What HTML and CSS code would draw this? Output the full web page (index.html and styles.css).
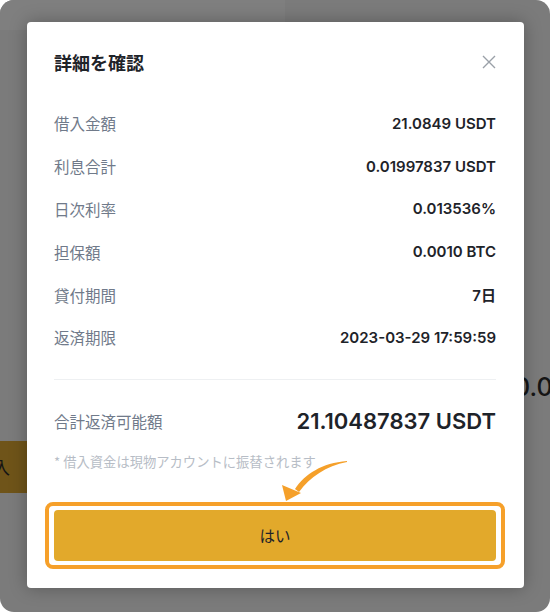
FILE: index.html
```html
<!DOCTYPE html>
<html lang="ja">
<head>
<meta charset="utf-8">
<link rel="stylesheet" href="styles.css">
</head>
<body>
<div class="screen">
  <div class="bg-top"></div>
  <div class="bg-btn">入</div>
  <div class="bg-num">0.0</div>
  <div class="modal">
    <div class="header">
      <div class="title">詳細を確認</div>
      <svg class="close" width="14" height="14" viewBox="0 0 14 14"><path d="M1 1L13 13M13 1L1 13" stroke="#9aa0a8" stroke-width="1.4" fill="none"/></svg>
    </div>
    <div class="row"><span class="label">借入金額</span><span class="value">21.0849 USDT</span></div>
    <div class="row"><span class="label">利息合計</span><span class="value">0.01997837 USDT</span></div>
    <div class="row"><span class="label">日次利率</span><span class="value">0.013536%</span></div>
    <div class="row"><span class="label">担保額</span><span class="value">0.0010 BTC</span></div>
    <div class="row"><span class="label">貸付期間</span><span class="value">7日</span></div>
    <div class="row"><span class="label">返済期限</span><span class="value">2023-03-29 17:59:59</span></div>
    <div class="divider"></div>
    <div class="total"><span class="label">合計返済可能額</span><span class="total-value">21.10487837 USDT</span></div>
    <div class="note">* 借入資金は現物アカウントに振替されます</div>
    <div class="btn">はい<span class="highlight"></span></div>
  </div>
  <svg class="arrow" width="80" height="50" viewBox="278 455 80 50">
    <path d="M347 461 C 322 463 305 474 295 489 L 299 492 C 310 477 326 466 347 462 Z" fill="#f5a02a"/>
    <path d="M286 501 L 282 485 L 301 493 Z" fill="#f5a02a"/>
  </svg>
</div>
</body>
</html>
```
FILE: styles.css
```css
html, body {
  margin: 0;
  padding: 0;
  background: #ffffff;
}
.screen {
  position: relative;
  width: 550px;
  height: 612px;
  border-radius: 14px;
  background: #7b7b7b;
  overflow: hidden;
  font-family: "Inter", "Noto Sans CJK JP", sans-serif;
}
.bg-top {
  position: absolute;
  left: 0;
  top: 0;
  width: 285px;
  height: 30px;
  background: #7f7f7f;
  border-bottom-right-radius: 8px;
}
.bg-btn {
  position: absolute;
  left: 0;
  top: 441px;
  width: 28px;
  height: 52px;
  background: #6f5419;
  color: #151515;
  font-size: 17px;
  line-height: 52px;
  text-indent: -7px;
  overflow: hidden;
  font-family: "Noto Sans CJK JP", sans-serif;
}
.bg-num {
  position: absolute;
  left: 514px;
  top: 372px;
  font-size: 25px;
  font-weight: 500;
  color: #151515;
}
.modal {
  position: absolute;
  left: 27px;
  top: 22px;
  width: 497px;
  height: 566px;
  box-sizing: border-box;
  padding: 0 28px 0 27px;
  background: #ffffff;
  border-radius: 4px;
  box-shadow: 0 0 18px rgba(0, 0, 0, 0.28);
  display: flex;
  flex-direction: column;
}
.header {
  height: 80px;
  display: flex;
  align-items: center;
  justify-content: space-between;
}
.title {
  font-family: "Noto Sans CJK JP", sans-serif;
  font-size: 18px;
  font-weight: 700;
  color: #1e2329;
}
.row {
  height: 42.8px;
  display: flex;
  align-items: center;
  justify-content: space-between;
}
.label {
  font-family: "Noto Sans CJK JP", sans-serif;
  font-size: 15.5px;
  color: #707a8a;
}
.value {
  font-size: 15px;
  font-weight: 600;
  color: #1e2329;
}
.divider {
  margin-top: 20px;
  border-top: 1px solid #eef0f2;
}
.total {
  margin-top: 21px;
  height: 40px;
  display: flex;
  align-items: center;
  justify-content: space-between;
}
.total-value {
  font-size: 22px;
  font-weight: 600;
  color: #1e2329;
}
.note {
  margin-top: 12px;
  font-family: "Noto Sans CJK JP", sans-serif;
  font-size: 13.3px;
  line-height: 18px;
  color: #b7bdc6;
}
.btn {
  position: relative;
  margin-top: 39px;
  height: 51px;
  border-radius: 4px;
  background: #e2a92b;
  display: flex;
  align-items: center;
  justify-content: center;
  font-family: "Noto Sans CJK JP", sans-serif;
  font-size: 15.5px;
  color: #1e2329;
}
.highlight {
  position: absolute;
  left: -9px;
  right: -9px;
  top: -8px;
  bottom: -8px;
  border: 4px solid #f6a02a;
  border-radius: 8px;
}
.arrow {
  position: absolute;
  left: 278px;
  top: 455px;
}
```
